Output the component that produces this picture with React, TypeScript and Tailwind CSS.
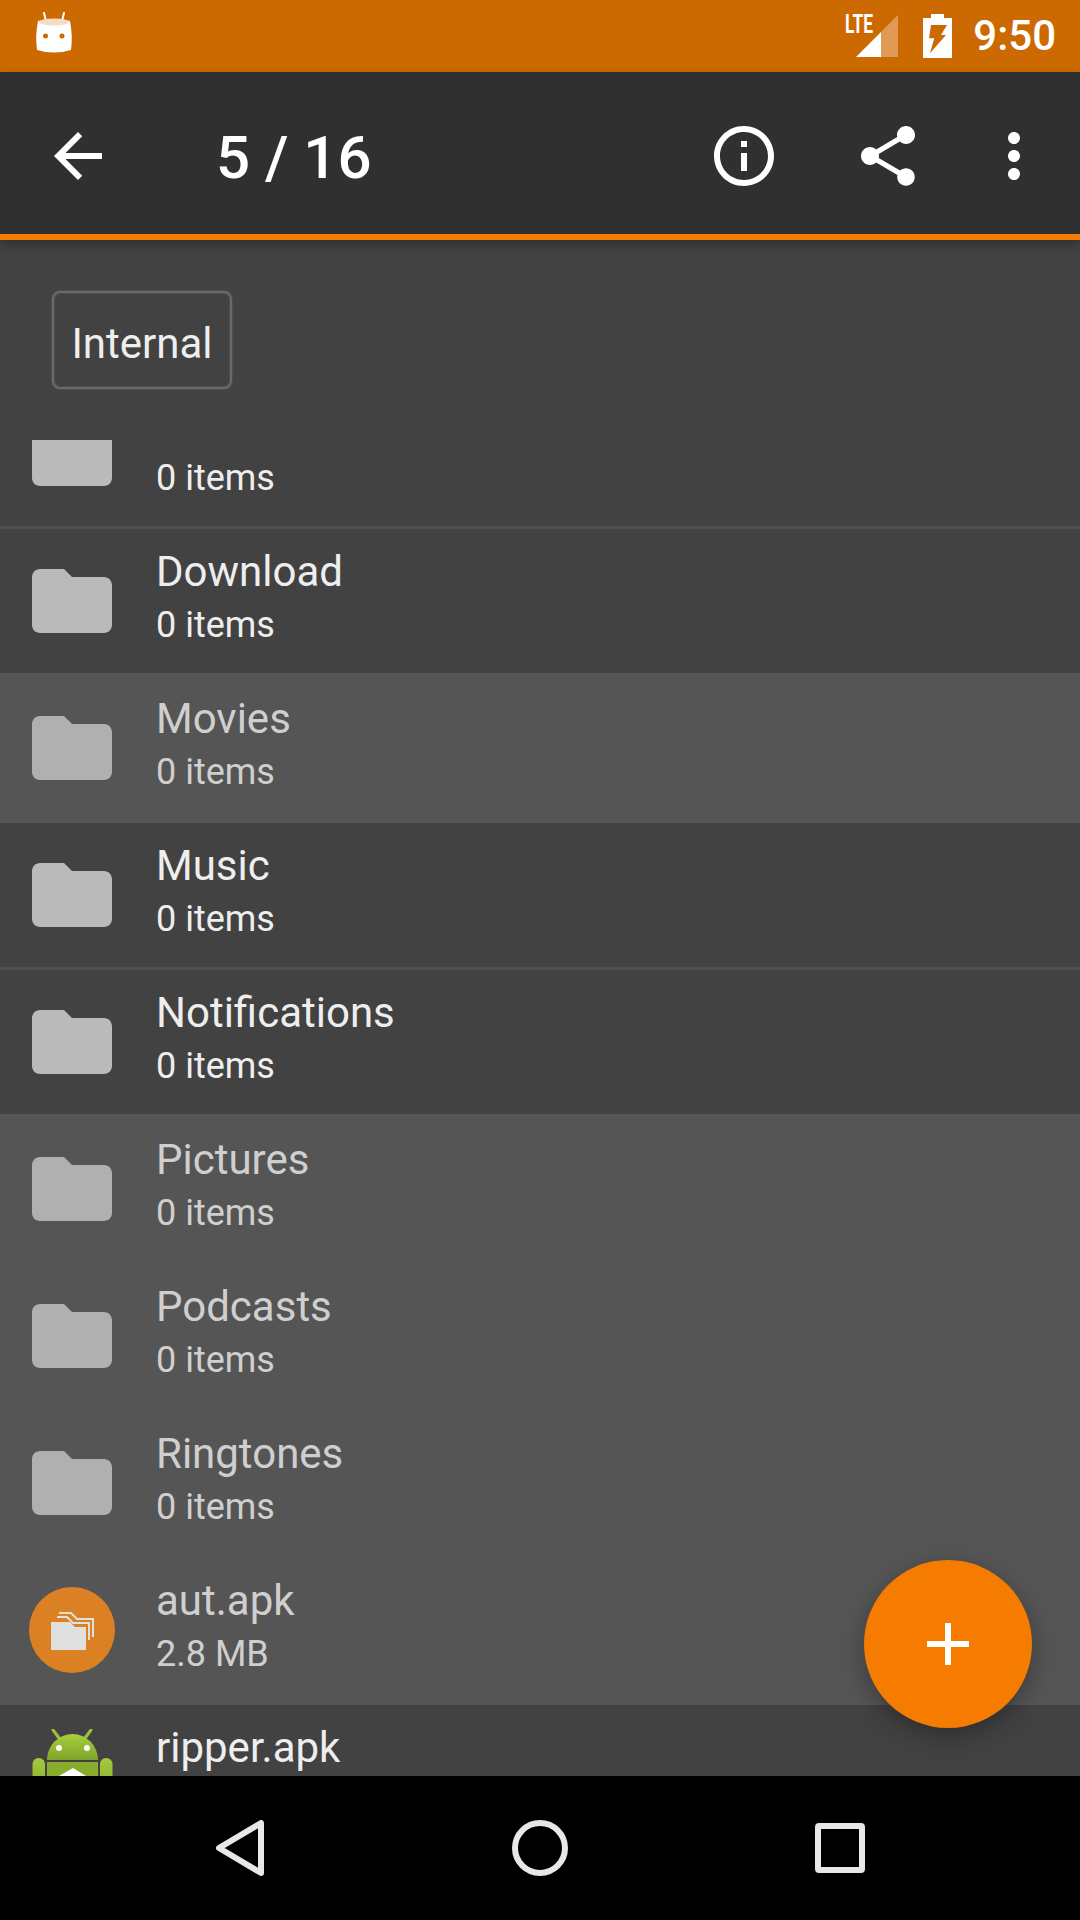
import React from 'react';

type Row = {
  name: string;
  sub?: string;
  selected?: boolean;
  icon?: 'folder' | 'aut' | 'android';
};

const rows: Row[] = [
  { name: '', sub: '0 items' },
  { name: 'Download', sub: '0 items' },
  { name: 'Movies', sub: '0 items', selected: true },
  { name: 'Music', sub: '0 items' },
  { name: 'Notifications', sub: '0 items' },
  { name: 'Pictures', sub: '0 items', selected: true },
  { name: 'Podcasts', sub: '0 items', selected: true },
  { name: 'Ringtones', sub: '0 items', selected: true },
  { name: 'aut.apk', sub: '2.8 MB', selected: true, icon: 'aut' },
  { name: 'ripper.apk', icon: 'android' },
];

const StatusBot = () => (
  <svg width="46" height="48" viewBox="0 0 46 48">
    <path d="M13 1l2 8M33 1l-2 8" stroke="#fff" strokeWidth="2" strokeLinecap="round" />
    <path d="M7 9Q23 5 39 9Q42 24 40 38Q23 43 6 38Q4 24 7 9Z" fill="#fff" />
    <ellipse cx="23" cy="10" rx="15" ry="3.5" fill="#f5dcc4" />
    <circle cx="14.5" cy="24" r="2.5" fill="#cc6900" />
    <circle cx="31" cy="24" r="2.5" fill="#cc6900" />
  </svg>
);

const Signal = () => (
  <svg className="overflow-visible" width="54" height="46" viewBox="0 0 54 46">
    <text x="1" y="20" fontSize="25" fontWeight="700" fontFamily="Roboto, sans-serif" fill="#fff" textLength="28" lengthAdjust="spacingAndGlyphs">
      LTE
    </text>
    <path d="M12 44L37 19V44Z" fill="#fff" />
    <path d="M37 44V19L54 2V44Z" fill="#e09a55" />
  </svg>
);

const Battery = () => (
  <svg width="29" height="44" viewBox="0 0 29 44">
    <path d="M8 0H21V4H29V44H0V4H8Z" fill="#fff" />
    <path d="M8 11H24L18 21H23L7 39.3L11.3 24.3H6Z" fill="#cc6900" />
  </svg>
);

const Folder = ({ fill }: { fill: string }) => (
  <svg width="96" height="96" viewBox="0 0 24 24" fill={fill}>
    <path d="M10 4H4c-1.1 0-2 .9-2 2v12c0 1.1.9 2 2 2h16c1.1 0 2-.9 2-2V8c0-1.1-.9-2-2-2h-8l-2-2z" />
  </svg>
);

const AutIcon = () => (
  <div className="w-[86px] h-[86px] ml-[5px] mt-[5px] rounded-full bg-[#dc8024]">
    <svg width="86" height="86" viewBox="0 0 86 86" fill="none">
      <path d="M22 35H41L46 40H57V63H22Z" fill="#e0e0e0" />
      <path d="M28 30H38L44 36H60V53" stroke="#e0e0e0" strokeWidth="2" />
      <path d="M30 26H42L48 32H64V50" stroke="#e0e0e0" strokeWidth="2" />
    </svg>
  </div>
);

const AndroidIcon = () => (
  <svg width="96" height="96" viewBox="0 0 96 96">
    <defs>
      <linearGradient id="droid" x1="0" y1="0" x2="0" y2="1">
        <stop offset="0" stopColor="#a9cf3f" />
        <stop offset="1" stopColor="#7ea32a" />
      </linearGradient>
      <linearGradient id="arm" x1="0" y1="0" x2="0" y2="1">
        <stop offset="0" stopColor="#a4ca3c" />
        <stop offset="1" stopColor="#7ea32a" />
      </linearGradient>
    </defs>
    <path d="M29 1l6 8M67 1l-6 8" stroke="#9cc23a" strokeWidth="3" strokeLinecap="round" />
    <path d="M23 31a25.5 26 0 0 1 51 0Z" fill="url(#droid)" />
    <rect x="23" y="33" width="51" height="60" fill="#88ad2e" />
    <rect x="8.5" y="29" width="12.5" height="44" rx="6" fill="url(#arm)" />
    <rect x="76" y="29" width="12.5" height="44" rx="6" fill="url(#arm)" />
    <circle cx="35" cy="19" r="3" fill="#fff" />
    <circle cx="63" cy="19" r="3" fill="#fff" />
    <path d="M35 47L49 39L62 47Z" fill="#fff" />
  </svg>
);

export default function App() {
  return (
    <div className="relative w-[1080px] h-[1920px] flex flex-col overflow-hidden bg-[#424242] [font-family:Roboto,sans-serif]">
      {/* status bar */}
      <div className="h-[72px] shrink-0 flex items-center bg-[#cc6900] pl-[31px] pr-[24px]">
        <StatusBot />
        <div className="flex-1" />
        <Signal />
        <div className="ml-[25px]">
          <Battery />
        </div>
        <p className="ml-[21px] text-[42px] leading-[56px] font-medium text-white">9:50</p>
      </div>

      {/* toolbar */}
      <div className="relative z-10 h-[168px] shrink-0 flex items-center pt-[6px] pl-[42px] pr-[30px] bg-[#303030] border-b-[6px] border-[#f57c00] shadow-[0_4px_10px_rgba(0,0,0,0.3)]">
        <svg width="72" height="72" viewBox="0 0 24 24" fill="#fff">
          <path d="M20 11H7.83l5.59-5.59L12 4l-8 8 8 8 1.41-1.41L7.83 13H20v-2z" />
        </svg>
        <p className="ml-[102px] mt-[4px] text-[60px] leading-[72px] font-medium text-white">5 / 16</p>
        <div className="flex-1" />
        <svg width="72" height="72" viewBox="0 0 24 24" fill="#fff">
          <path d="M11 17h2v-6h-2v6zm1-15C6.48 2 2 6.48 2 12s4.48 10 10 10 10-4.48 10-10S17.52 2 12 2zm0 18c-4.41 0-8-3.59-8-8s3.59-8 8-8 8 3.59 8 8-3.59 8-8 8zM11 9h2V7h-2v2z" />
        </svg>
        <svg className="ml-[72px]" width="72" height="72" viewBox="0 0 24 24" fill="#fff">
          <path d="M18 16.08c-.76 0-1.44.3-1.96.77L8.91 12.7c.05-.23.09-.46.09-.7s-.04-.47-.09-.7l7.05-4.11c.54.5 1.25.81 2.04.81 1.66 0 3-1.34 3-3s-1.34-3-3-3-3 1.34-3 3c0 .24.04.47.09.7L8.04 9.81C7.5 9.31 6.79 9 6 9c-1.66 0-3 1.34-3 3s1.34 3 3 3c.79 0 1.5-.31 2.04-.81l7.12 4.16c-.05.21-.08.43-.08.65 0 1.61 1.31 2.92 2.92 2.92 1.61 0 2.92-1.31 2.92-2.92s-1.31-2.92-2.92-2.92z" />
        </svg>
        <svg className="ml-[54px]" width="72" height="72" viewBox="0 0 24 24" fill="#fff">
          <path d="M12 8c1.1 0 2-.9 2-2s-.9-2-2-2-2 .9-2 2 .9 2 2 2zm0 2c-1.1 0-2 .9-2 2s.9 2 2 2 2-.9 2-2-.9-2-2-2zm0 6c-1.1 0-2 .9-2 2s.9 2 2 2 2-.9 2-2-.9-2-2-2z" />
        </svg>
      </div>

      {/* breadcrumb */}
      <div className="h-[200px] shrink-0 pt-[51px] pl-[52px]">
        <div className="w-[180px] h-[98px] flex items-center justify-center pt-[6px] rounded-[8px] border-[2px] border-[#6a6a6a] shadow-[0_0_2px_#6a6a6a,inset_0_0_2px_#6a6a6a] text-[42px] text-[#eeeeee]">
          Internal
        </div>
      </div>

      {/* file list, scrolled so the first row is cut */}
      <div className="flex-1 overflow-hidden">
        <div className="-mt-[61px]">
          {rows.map((row, i) => {
            const prevSelected = i > 0 && rows[i - 1].selected;
            return (
              <div
                key={i}
                className={`h-[147px] flex border-t-[3px] ${row.selected ? 'bg-[#555555]' : 'bg-[#424242]'} ${
                  row.selected || prevSelected ? 'border-[#555555]' : 'border-[#4e4e4e]'
                }`}
              >
                <div className="w-[96px] h-[96px] ml-[24px] mt-[24px] shrink-0">
                  {row.icon === 'aut' ? (
                    <AutIcon />
                  ) : row.icon === 'android' ? (
                    <AndroidIcon />
                  ) : (
                    <Folder fill={row.selected ? '#b0b0b0' : '#bababa'} />
                  )}
                </div>
                <div className={`ml-[36px] pt-[15px] ${row.selected ? 'text-[#cfcfcf]' : 'text-[#eeeeee]'}`}>
                  <p className="h-[56px] text-[42px] leading-[56px]">{row.name}</p>
                  <p className="mt-[1px] text-[36px] leading-[48px]">{row.sub}</p>
                </div>
              </div>
            );
          })}
        </div>
      </div>

      {/* fab */}
      <div className="absolute left-[864px] top-[1560px] w-[168px] h-[168px] flex items-center justify-center rounded-full bg-[#f57c00] shadow-[0_8px_24px_rgba(0,0,0,0.3)]">
        <svg width="42" height="42" viewBox="0 0 42 42" fill="#fff">
          <path d="M18 0h6v18h18v6H24v18h-6V24H0v-6h18z" />
        </svg>
      </div>

      {/* nav bar */}
      <div className="relative z-10 h-[144px] shrink-0 flex items-center bg-black pl-[216px]">
        <svg width="48" height="56" viewBox="0 0 48 56" fill="none" stroke="#e8e8e8" strokeWidth="6" strokeLinejoin="round">
          <path d="M45 3V53L3 28Z" />
        </svg>
        <svg className="ml-[248px]" width="56" height="56" viewBox="0 0 56 56" fill="none" stroke="#e8e8e8" strokeWidth="6">
          <circle cx="28" cy="28" r="25" />
        </svg>
        <svg className="ml-[247px]" width="50" height="50" viewBox="0 0 50 50" fill="none" stroke="#e8e8e8" strokeWidth="6" strokeLinejoin="round">
          <rect x="3" y="3" width="44" height="44" rx="1" />
        </svg>
      </div>
    </div>
  );
}
